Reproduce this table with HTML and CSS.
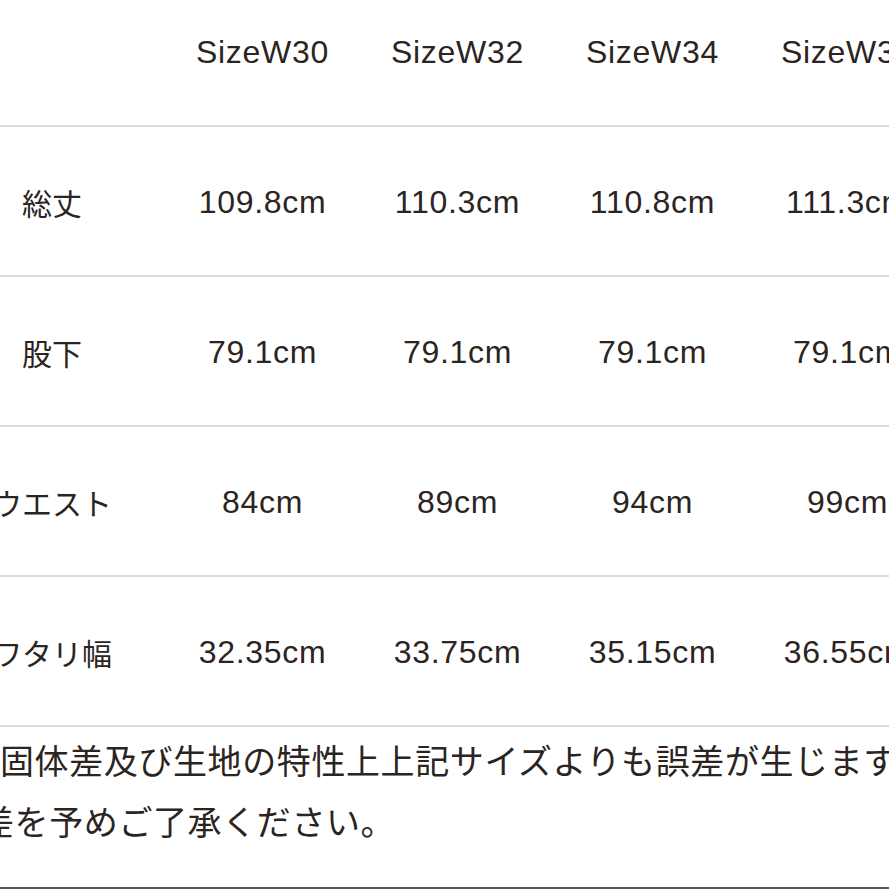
FILE: index.html
```html
<!DOCTYPE html>
<html lang="ja">
<head>
<meta charset="utf-8">
<title>サイズ表</title>
<link rel="stylesheet" href="styles.css">
</head>
<body>
<div class="sheet">
  <table class="size-table">
    <colgroup>
      <col class="col-label">
      <col class="col-data">
      <col class="col-data">
      <col class="col-data">
      <col class="col-data">
    </colgroup>
    <thead>
      <tr>
        <th class="label"></th>
        <th>SizeW30</th>
        <th>SizeW32</th>
        <th>SizeW34</th>
        <th>SizeW36</th>
      </tr>
    </thead>
    <tbody>
      <tr>
        <th class="label">総丈</th>
        <td>109.8cm</td>
        <td>110.3cm</td>
        <td>110.8cm</td>
        <td>111.3cm</td>
      </tr>
      <tr>
        <th class="label">股下</th>
        <td>79.1cm</td>
        <td>79.1cm</td>
        <td>79.1cm</td>
        <td>79.1cm</td>
      </tr>
      <tr>
        <th class="label">ウエスト</th>
        <td>84cm</td>
        <td>89cm</td>
        <td>94cm</td>
        <td>99cm</td>
      </tr>
      <tr>
        <th class="label">ワタリ幅</th>
        <td>32.35cm</td>
        <td>33.75cm</td>
        <td>35.15cm</td>
        <td>36.55cm</td>
      </tr>
    </tbody>
  </table>
  <div class="notes">
    <span class="line line-first">固体差及び生地の特性上上記サイズよりも誤差が生じます。</span>
    <span class="line line-second">差を予めご了承ください。</span>
  </div>
  <div class="bottom-rule"></div>
</div>
</body>
</html>
```
FILE: styles.css
```css
html, body {
  margin: 0;
  padding: 0;
  background: #ffffff;
}

body {
  width: 889px;
  height: 889px;
  overflow: hidden;
  font-family: "Liberation Sans", "Noto Sans CJK JP", sans-serif;
  color: #2b2421;
}

.sheet {
  width: 889px;
  height: 912px;
  margin-top: -23px;
  display: flex;
  flex-direction: column;
  overflow: hidden;
}

.size-table {
  border-collapse: collapse;
  table-layout: fixed;
  width: 1006px;
  margin-left: -61px;
  flex: none;
}

.col-label {
  width: 226px;
}

.col-data {
  width: 195px;
}

.size-table th,
.size-table td {
  height: 146px;
  padding: 2px 0 0 0;
  text-align: center;
  vertical-align: middle;
  font-size: 32px;
  font-weight: 400;
  letter-spacing: 0.7px;
  white-space: nowrap;
  border-bottom: 2px solid #dcdcdc;
}

.size-table .label {
  letter-spacing: 0;
  font-family: "Noto Sans CJK JP", sans-serif;
  font-size: 30px;
}

.notes {
  flex: 1;
  padding-top: 2px;
  font-family: "Noto Sans CJK JP", sans-serif;
  font-size: 34px;
  line-height: 61px;
  letter-spacing: 0.6px;
  white-space: nowrap;
  overflow: hidden;
}

.line {
  display: block;
}

.line-first {
  margin-left: 0;
}

.line-second {
  margin-left: -20px;
}

.bottom-rule {
  flex: none;
  height: 2px;
  background: #555555;
}
```
